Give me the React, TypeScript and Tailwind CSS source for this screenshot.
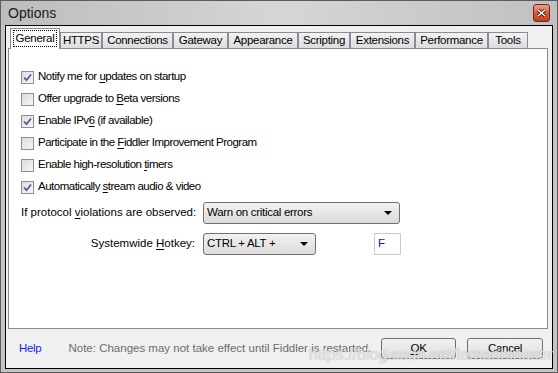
import React from "react";

const font = "font-['Liberation_Sans',Arial,sans-serif]";

const tabs = [
  { label: "General", w: "w-[50px]" },
  { label: "HTTPS", w: "w-[42px]" },
  { label: "Connections", w: "w-[71px]" },
  { label: "Gateway", w: "w-[55px]" },
  { label: "Appearance", w: "w-[70px]" },
  { label: "Scripting", w: "w-[52px]" },
  { label: "Extensions", w: "w-[65px]" },
  { label: "Performance", w: "w-[73px]" },
  { label: "Tools", w: "w-[40px]" },
];

function U({ children }: { children: React.ReactNode }) {
  return <span className="underline underline-offset-2">{children}</span>;
}

function Check({ checked, children }: { checked: boolean; children: React.ReactNode }) {
  return (
    <div className="flex h-[22px] items-center gap-[4px]">
      <span className="flex h-[13px] w-[13px] items-center justify-center border border-[#8e8f8f] bg-gradient-to-br from-[#dcdcdc] to-[#f7f7f7]">
        {checked && (
          <svg width="9" height="9" viewBox="0 0 9 9">
            <path d="M1 4.5 L3.5 7.2 L8 1.5" fill="none" stroke="#4a5f8f" strokeWidth="1.8" />
          </svg>
        )}
      </span>
      <span className="tracking-[-0.5px]">{children}</span>
    </div>
  );
}

function Arrow() {
  return (
    <svg width="8" height="4" viewBox="0 0 8 4">
      <path d="M0 0 H8 L4 4 Z" fill="#000" />
    </svg>
  );
}

export default function App() {
  return (
    <div className={`${font} relative flex h-[373px] w-[558px] flex-col border border-[#5c5c5c] bg-[#c4c4c4] text-[11.5px] tracking-[-0.3px] text-black`}>
      <div className="flex h-[24px] shrink-0 items-center justify-between bg-gradient-to-r from-[#bcbcbc] via-[#d6d6d6] to-[#c0c0c0] pl-[7px] pr-[7px]">
        <span className="text-[14px] leading-none tracking-normal text-[#1a1a1a]">Options</span>
        <div className="flex h-[18px] w-[17px] items-center justify-center rounded-[3px] border border-[#6e2a1c] bg-gradient-to-b from-[#eda08a] via-[#dc5a38] to-[#c83c1a]">
          <svg width="9" height="8" viewBox="0 0 9 8">
            <path d="M1 1 L8 7 M8 1 L1 7" stroke="#3a1208" strokeWidth="3" />
            <path d="M1 1 L8 7 M8 1 L1 7" stroke="#fff" strokeWidth="1.6" />
          </svg>
        </div>
      </div>

      <div className="mx-[4px] mb-[3px] flex flex-1 flex-col border border-black bg-[#f0f0f0]">
        <div className="ml-[2px] mr-[4px] flex flex-col pt-[2px]">
          <div className="flex items-end pl-[2px]">
            {tabs.map((t, i) =>
              i === 0 ? (
                <div
                  key={t.label}
                  className={`${t.w} relative z-10 -mb-px flex h-[21px] items-start justify-center border border-b-0 border-[#898c95] bg-white pt-[1px]`}
                >
                  <span className="border border-dotted border-black px-[2px] leading-[15px]">{t.label}</span>
                </div>
              ) : (
                <div
                  key={t.label}
                  className={`${t.w} flex h-[16px] items-center justify-center border border-b-0 border-[#898c95] bg-gradient-to-b from-[#f3f3f3] to-[#dcdcdc] leading-none`}
                >
                  {t.label}
                </div>
              )
            )}
          </div>

          <div className="flex h-[281px] flex-col border border-[#898c95] bg-white pl-[12px] pt-[17px]">
            <Check checked>Notify me for <U>u</U>pdates on startup</Check>
            <Check checked={false}>Offer upgrade to <U>B</U>eta versions</Check>
            <Check checked>Enable IPv<U>6</U> (if available)</Check>
            <Check checked={false}>Participate in the <U>F</U>iddler Improvement Program</Check>
            <Check checked={false}>Enable high-resolution <U>t</U>imers</Check>
            <Check checked>Automatically <U>s</U>tream audio &amp; video</Check>

            <div className="mt-[4px] flex items-center">
              <span className="w-[182px] whitespace-nowrap tracking-normal">If protocol <U>v</U>iolations are observed:</span>
              <div className="flex h-[22px] w-[197px] items-center justify-between rounded-[3px] border border-[#707070] bg-gradient-to-b from-[#f2f2f2] to-[#dbdbdb] pl-[3px] pr-[7px]">
                <span>Warn on critical errors</span>
                <Arrow />
              </div>
            </div>

            <div className="mt-[9px] flex items-center">
              <span className="w-[182px] whitespace-nowrap pr-[8px] text-right tracking-normal">Systemwide <U>H</U>otkey:</span>
              <div className="flex h-[22px] w-[113px] items-center justify-between rounded-[3px] border border-[#707070] bg-gradient-to-b from-[#f2f2f2] to-[#dbdbdb] pl-[3px] pr-[7px]">
                <span>CTRL + ALT +</span>
                <Arrow />
              </div>
              <div className="ml-[58px] flex h-[22px] w-[27px] items-center border border-[#c5cad3] bg-white pl-[3px] text-[#1a1a8c]">
                F
              </div>
            </div>
          </div>
        </div>

        <div className="flex flex-1 items-center pl-[13px] pr-[9px]">
          <span className="text-[#1c1cf0]">Help</span>
          <span className="ml-[27px] whitespace-nowrap tracking-normal text-[#6d6d6d]">Note: Changes may not take effect until Fiddler is restarted.</span>
          <div className="ml-auto flex gap-[11px]">
            <button className="flex h-[21px] w-[75px] items-center justify-center rounded-[3px] border border-[#707070] bg-gradient-to-b from-[#f2f2f2] to-[#dcdcdc]">
              <U>O</U>K
            </button>
            <button className="flex h-[21px] w-[76px] items-center justify-center rounded-[3px] border border-[#707070] bg-gradient-to-b from-[#f2f2f2] to-[#dcdcdc]">
              Cancel
            </button>
          </div>
        </div>
      </div>

      <span className="pointer-events-none absolute left-[308px] top-[342px] text-[16px] tracking-normal text-white/70 [text-shadow:0_0_1px_#9a9a9a]">
        https://blog.csdn.net/lamanhinuxer
      </span>
    </div>
  );
}
